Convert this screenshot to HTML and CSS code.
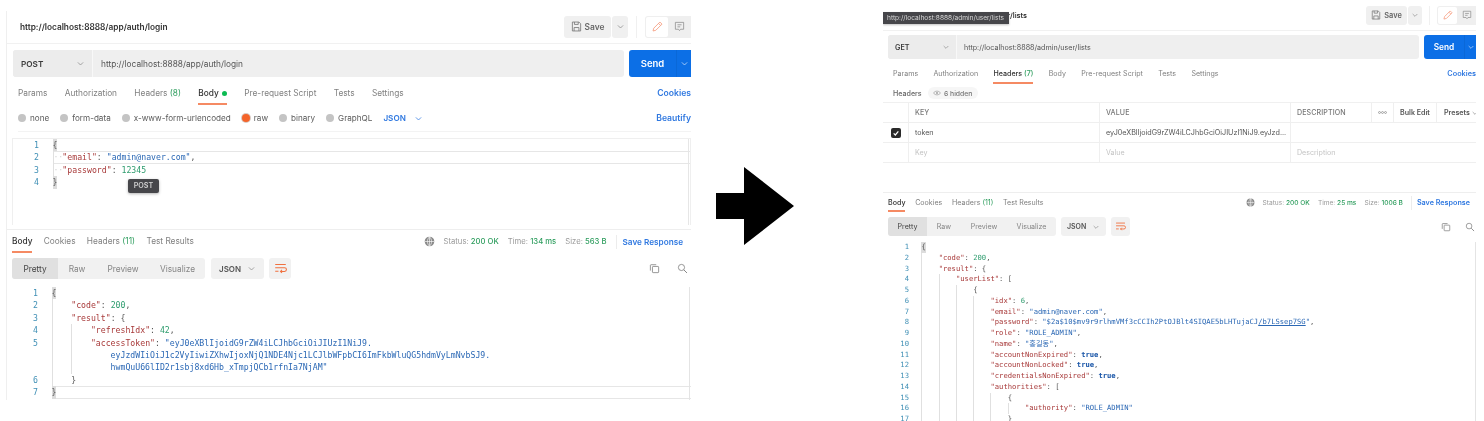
FILE: index.html
```html
<!DOCTYPE html>
<html lang="en">
<head>
<meta charset="utf-8">
<title>Postman requests</title>
<link rel="stylesheet" href="styles.css">
</head>
<body>
<svg class="defs" width="0" height="0" aria-hidden="true">
  <symbol id="i-save" viewBox="0 0 16 16"><path d="M2 1.5h9.5l2.5 2.5v10.500H2zM5 1.500v3.500h5.500v-3.500M4.500 14.500v-5h7v5" fill="none" stroke="currentColor" stroke-width="1.200"/></symbol>
  <symbol id="i-chev" viewBox="0 0 12 12"><path d="M2.500 4.500L6 8l3.500-3.500" fill="none" stroke="currentColor" stroke-width="1"/></symbol>
  <symbol id="i-pen" viewBox="0 0 16 16"><path d="M11.500 1.500l3 3-9 9-4 1 1-4zM9.500 3.500l3 3" fill="none" stroke="currentColor" stroke-width="1.200"/></symbol>
  <symbol id="i-comment" viewBox="0 0 16 16"><path d="M2 2h12v10H9.500L8 14l-1.500-2H2zM5 5.500h6M5 8.500h4" fill="none" stroke="currentColor" stroke-width="1.100"/></symbol>
  <symbol id="i-globe" viewBox="0 0 16 16"><circle cx="8" cy="8" r="7" fill="#8a8a8a"/><path d="M1 8h14M8 1v14M8 1c-4 4-4 10 0 14M8 1c4 4 4 10 0 14" fill="none" stroke="#fff" stroke-width=".9"/></symbol>
  <symbol id="i-copy" viewBox="0 0 16 16"><path d="M10.500 2.500H3a1 1 0 0 0-1 1V11" fill="none" stroke="currentColor" stroke-width="1.100"/><rect x="5" y="5" width="9" height="9" rx="1" fill="none" stroke="currentColor" stroke-width="1.100"/></symbol>
  <symbol id="i-search" viewBox="0 0 16 16"><circle cx="6.500" cy="6.500" r="4.500" fill="none" stroke="currentColor" stroke-width="1.100"/><path d="M10 10l4.500 4.500" stroke="currentColor" stroke-width="1.300"/></symbol>
  <symbol id="i-wrap" viewBox="0 0 16 16"><path d="M1.500 3h13M1.500 7h11.500a2.300 2.300 0 0 1 0 4.600H8M9.800 9.800L8 11.600l1.800 1.800M1.500 11.500h4" fill="none" stroke="currentColor" stroke-width="1.300"/></symbol>
  <symbol id="i-eye" viewBox="0 0 16 16"><path d="M1 8c3-5 11-5 14 0-3 5-11 5-14 0z" fill="none" stroke="currentColor" stroke-width="1.300"/><circle cx="8" cy="8" r="1.800" fill="currentColor"/></symbol>
  <symbol id="i-check" viewBox="0 0 12 12"><path d="M2.500 6.500l2.500 2.500 4.500-5.500" fill="none" stroke="currentColor" stroke-width="1.800"/></symbol>
  <symbol id="i-dots" viewBox="0 0 12 4"><circle cx="2" cy="2" r="1.300" fill="none" stroke="currentColor" stroke-width=".8"/><circle cx="6" cy="2" r="1.300" fill="none" stroke="currentColor" stroke-width=".8"/><circle cx="10" cy="2" r="1.300" fill="none" stroke="currentColor" stroke-width=".8"/></symbol>
</svg>

<main class="page">
  <section class="panel panel-a">
    <header class="title-row">
      <span class="title">http://localhost:8888/app/auth/login</span>
      <div class="title-tools">
        <span class="save"><svg class="ico-save"><use href="#i-save"/></svg>Save</span>
        <span class="save-more"><svg class="ico-chev"><use href="#i-chev"/></svg></span>
        <span class="tool-sep"></span>
        <span class="mode">
          <span class="mode-on"><svg class="ico-mode"><use href="#i-pen"/></svg></span>
          <span class="mode-off"><svg class="ico-mode"><use href="#i-comment"/></svg></span>
        </span>
      </div>
    </header>
    <div class="url-row">
      <div class="url-box">
        <span class="method">POST<svg class="ico-chev"><use href="#i-chev"/></svg></span>
        <span class="url">http://localhost:8888/app/auth/login</span>
      </div>
      <div class="send"><span class="send-label">Send</span><span class="send-more"><svg class="ico-chev"><use href="#i-chev"/></svg></span></div>
    </div>
    <nav class="tabs">
      <span class="tab">Params</span>
      <span class="tab">Authorization</span>
      <span class="tab">Headers <em>(8)</em></span>
      <span class="tab tab-on">Body <i class="dot"></i></span>
      <span class="tab">Pre-request Script</span>
      <span class="tab">Tests</span>
      <span class="tab">Settings</span>
      <span class="tab-link">Cookies</span>
    </nav>
    <div class="radios">
      <span class="radio"><i></i>none</span>
      <span class="radio"><i></i>form-data</span>
      <span class="radio"><i></i>x-www-form-urlencoded</span>
      <span class="radio radio-on"><i></i>raw</span>
      <span class="radio"><i></i>binary</span>
      <span class="radio"><i></i>GraphQL</span>
      <span class="lang">JSON<svg class="ico-chev"><use href="#i-chev"/></svg></span>
      <span class="tab-link">Beautify</span>
    </div>
    <div class="editor code">
      <div class="line"><span class="n">1</span><span class="c"><b class="fold">{</b></span></div>
      <div class="line active"><span class="n">2</span><span class="c"><u class="gs">··</u><span class="k">"email"</span>: <span class="s">"admin@naver.com"</span>,</span></div>
      <div class="line"><span class="n">3</span><span class="c"><u class="gs">··</u><span class="k">"password"</span>: <span class="d">12345</span></span></div>
      <div class="line"><span class="n">4</span><span class="c"><b class="fold">}</b></span></div>
      <span class="tip">POST</span>
    </div>
    <div class="res-tabs">
      <span class="tab tab-on">Body</span>
      <span class="tab">Cookies</span>
      <span class="tab">Headers <em>(11)</em></span>
      <span class="tab">Test Results</span>
      <div class="meta">
        <svg class="ico-globe"><use href="#i-globe"/></svg>
        <span>Status: <em>200 OK</em></span>
        <span>Time: <em>134 ms</em></span>
        <span>Size: <em>563 B</em></span>
        <span class="meta-sep"></span>
        <span class="meta-link">Save Response</span>
        <svg class="ico-chev blue"><use href="#i-chev"/></svg>
      </div>
    </div>
    <div class="view-bar">
      <div class="views"><span class="view view-on">Pretty</span><span class="view">Raw</span><span class="view">Preview</span><span class="view">Visualize</span></div>
      <span class="fmt">JSON<svg class="ico-chev"><use href="#i-chev"/></svg></span>
      <span class="wrap"><svg class="ico-wrap"><use href="#i-wrap"/></svg></span>
      <span class="view-tools"><svg class="ico-tool"><use href="#i-copy"/></svg><svg class="ico-tool"><use href="#i-search"/></svg></span>
    </div>
    <div class="output code">
      <div class="line"><span class="n">1</span><span class="c"><b class="fold">{</b></span></div>
      <div class="line"><span class="n">2</span><span class="c"><u class="g"></u><span class="k">"code"</span>: <span class="d">200</span>,</span></div>
      <div class="line"><span class="n">3</span><span class="c"><u class="g"></u><span class="k">"result"</span>: {</span></div>
      <div class="line"><span class="n">4</span><span class="c"><u class="g"></u><u class="g"></u><span class="k">"refreshIdx"</span>: <span class="d">42</span>,</span></div>
      <div class="line"><span class="n">5</span><span class="c"><u class="g"></u><u class="g"></u><span class="k">"accessToken"</span>: <span class="s">"eyJ0eXBlIjoidG9rZW4iLCJhbGciOiJIUzI1NiJ9.</span></span></div>
      <div class="line"><span class="n"></span><span class="c"><u class="g"></u><u class="g"></u><u class="gn"></u><span class="s">eyJzdWIiOiJ1c2VyIiwiZXhwIjoxNjQ1NDE4Njc1LCJlbWFpbCI6ImFkbWluQG5hdmVyLmNvbSJ9.</span></span></div>
      <div class="line"><span class="n"></span><span class="c"><u class="g"></u><u class="g"></u><u class="gn"></u><span class="s">hwmQuU66lID2r1sbj8xd6Hb_xTmpjQCb1rfnIa7NjAM"</span></span></div>
      <div class="line"><span class="n">6</span><span class="c"><u class="g"></u>}</span></div>
      <div class="line active"><span class="n">7</span><span class="c"><b class="fold">}</b></span></div>
    </div>
  </section>

  <svg class="arrow" viewBox="0 0 78 78" aria-hidden="true"><path d="M0 26h28V0l50 39-50 39V52H0z"/></svg>

  <section class="panel panel-b">
    <header class="title-row">
      <span class="title">http://localhost:8888/admin/user/lists</span>
      <div class="title-tools">
        <span class="save"><svg class="ico-save"><use href="#i-save"/></svg>Save</span>
        <span class="save-more"><svg class="ico-chev"><use href="#i-chev"/></svg></span>
        <span class="tool-sep"></span>
        <span class="mode">
          <span class="mode-on"><svg class="ico-mode"><use href="#i-pen"/></svg></span>
          <span class="mode-off"><svg class="ico-mode"><use href="#i-comment"/></svg></span>
        </span>
      </div>
      <span class="url-tip">http://localhost:8888/admin/user/lists</span>
    </header>
    <div class="url-row">
      <div class="url-box">
        <span class="method">GET<svg class="ico-chev"><use href="#i-chev"/></svg></span>
        <span class="url">http://localhost:8888/admin/user/lists</span>
      </div>
      <div class="send"><span class="send-label">Send</span><span class="send-more"><svg class="ico-chev"><use href="#i-chev"/></svg></span></div>
    </div>
    <nav class="tabs">
      <span class="tab">Params</span>
      <span class="tab">Authorization</span>
      <span class="tab tab-on">Headers <em>(7)</em></span>
      <span class="tab">Body</span>
      <span class="tab">Pre-request Script</span>
      <span class="tab">Tests</span>
      <span class="tab">Settings</span>
      <span class="tab-link">Cookies</span>
    </nav>
    <div class="hdr-row">
      <span class="hdr-label">Headers</span>
      <span class="hidden-pill"><svg class="ico-eye"><use href="#i-eye"/></svg>6 hidden</span>
    </div>
    <div class="table">
      <div class="cell"></div>
      <div class="cell th">KEY</div>
      <div class="cell th">VALUE</div>
      <div class="cell th">DESCRIPTION</div>
      <div class="cell th th-c"><svg class="ico-dots"><use href="#i-dots"/></svg></div>
      <div class="cell th th-c th-b">Bulk Edit</div>
      <div class="cell th th-b th-p">Presets<svg class="ico-chev"><use href="#i-chev"/></svg></div>

      <div class="cell cell-check"><span class="check"><svg class="ico-check"><use href="#i-check"/></svg></span></div>
      <div class="cell">token</div>
      <div class="cell cell-clip">eyJ0eXBlIjoidG9rZW4iLCJhbGciOiJIUzI1NiJ9.eyJzd...</div>
      <div class="cell cell-wide"></div>

      <div class="cell"></div>
      <div class="cell ph">Key</div>
      <div class="cell ph">Value</div>
      <div class="cell cell-wide ph">Description</div>
    </div>
    <div class="res-tabs">
      <span class="tab tab-on">Body</span>
      <span class="tab">Cookies</span>
      <span class="tab">Headers <em>(11)</em></span>
      <span class="tab">Test Results</span>
      <div class="meta">
        <svg class="ico-globe"><use href="#i-globe"/></svg>
        <span>Status: <em>200 OK</em></span>
        <span>Time: <em>25 ms</em></span>
        <span>Size: <em>1006 B</em></span>
        <span class="meta-sep"></span>
        <span class="meta-link">Save Response</span>
        <svg class="ico-chev blue"><use href="#i-chev"/></svg>
      </div>
    </div>
    <div class="view-bar">
      <div class="views"><span class="view view-on">Pretty</span><span class="view">Raw</span><span class="view">Preview</span><span class="view">Visualize</span></div>
      <span class="fmt">JSON<svg class="ico-chev"><use href="#i-chev"/></svg></span>
      <span class="wrap"><svg class="ico-wrap"><use href="#i-wrap"/></svg></span>
      <span class="view-tools"><svg class="ico-tool"><use href="#i-copy"/></svg><svg class="ico-tool"><use href="#i-search"/></svg></span>
    </div>
    <div class="output code">
      <div class="line"><span class="n">1</span><span class="c"><b class="fold">{</b></span></div>
      <div class="line"><span class="n">2</span><span class="c"><u class="g"></u><span class="k">"code"</span>: <span class="d">200</span>,</span></div>
      <div class="line"><span class="n">3</span><span class="c"><u class="g"></u><span class="k">"result"</span>: {</span></div>
      <div class="line"><span class="n">4</span><span class="c"><u class="g"></u><u class="g"></u><span class="k">"userList"</span>: [</span></div>
      <div class="line"><span class="n">5</span><span class="c"><u class="g"></u><u class="g"></u><u class="g"></u>{</span></div>
      <div class="line"><span class="n">6</span><span class="c"><u class="g"></u><u class="g"></u><u class="g"></u><u class="g"></u><span class="k">"idx"</span>: <span class="d">6</span>,</span></div>
      <div class="line"><span class="n">7</span><span class="c"><u class="g"></u><u class="g"></u><u class="g"></u><u class="g"></u><span class="k">"email"</span>: <span class="s">"admin@naver.com"</span>,</span></div>
      <div class="line"><span class="n">8</span><span class="c"><u class="g"></u><u class="g"></u><u class="g"></u><u class="g"></u><span class="k">"password"</span>: <span class="s">"$2a$10$mv9r9rlhmVMf3cCCIh2PtOJBlt4SIQAE5bLHTujaCJ<a class="link">/b7LSsep7SG</a>"</span>,</span></div>
      <div class="line"><span class="n">9</span><span class="c"><u class="g"></u><u class="g"></u><u class="g"></u><u class="g"></u><span class="k">"role"</span>: <span class="s">"ROLE_ADMIN"</span>,</span></div>
      <div class="line"><span class="n">10</span><span class="c"><u class="g"></u><u class="g"></u><u class="g"></u><u class="g"></u><span class="k">"name"</span>: <span class="s">"홍길동"</span>,</span></div>
      <div class="line"><span class="n">11</span><span class="c"><u class="g"></u><u class="g"></u><u class="g"></u><u class="g"></u><span class="k">"accountNonExpired"</span>: <span class="t">true</span>,</span></div>
      <div class="line"><span class="n">12</span><span class="c"><u class="g"></u><u class="g"></u><u class="g"></u><u class="g"></u><span class="k">"accountNonLocked"</span>: <span class="t">true</span>,</span></div>
      <div class="line"><span class="n">13</span><span class="c"><u class="g"></u><u class="g"></u><u class="g"></u><u class="g"></u><span class="k">"credentialsNonExpired"</span>: <span class="t">true</span>,</span></div>
      <div class="line"><span class="n">14</span><span class="c"><u class="g"></u><u class="g"></u><u class="g"></u><u class="g"></u><span class="k">"authorities"</span>: [</span></div>
      <div class="line"><span class="n">15</span><span class="c"><u class="g"></u><u class="g"></u><u class="g"></u><u class="g"></u><u class="g"></u>{</span></div>
      <div class="line"><span class="n">16</span><span class="c"><u class="g"></u><u class="g"></u><u class="g"></u><u class="g"></u><u class="g"></u><u class="g"></u><span class="k">"authority"</span>: <span class="s">"ROLE_ADMIN"</span></span></div>
      <div class="line"><span class="n">17</span><span class="c"><u class="g"></u><u class="g"></u><u class="g"></u><u class="g"></u><u class="g"></u>}</span></div>
    </div>
  </section>
</main>
</body>
</html>
```
FILE: styles.css
```css
* { box-sizing: border-box; }
html, body { margin: 0; height: 421px; overflow: hidden; background: #fff; }
.defs { position: absolute; }
.page { display: flex; align-items: flex-start; height: 421px; overflow: hidden; font-family: Inter, "Liberation Sans", sans-serif; color: #4a4a4a; }
.panel { position: relative; flex: none; overflow: hidden; background: #fff; filter: blur(.4px); }
.panel-a { width: 685px; height: 389px; margin: 11px 0 0 6px; border-left: 1px solid #efefef; font-size: 8.3px; }
.panel-b { width: 593px; height: 421px; margin-left: 89px; font-size: 7.1px; }
.arrow { flex: none; width: 78px; height: 78px; margin: 167px 0 0 25px; fill: #000; }

em { font-style: normal; color: #2f9e5f; }
svg { display: block; flex: none; }
.ico-chev { color: #8a8a8a; }
.ico-chev.blue { color: #2f78e0; }

/* title row */
.title-row { position: relative; display: flex; align-items: center; justify-content: space-between; border-bottom: 1px solid #f1f1f1; }
.panel-a .title-row { height: 33px; padding-left: 13px; }
.panel-b .title-row { height: 31px; padding-left: 10px; }
.title { font-weight: 600; color: #333; white-space: nowrap; }
.panel-a .title { font-size: 8.3px; }
.panel-b .title { font-size: 7.26px; }
.title-tools { display: flex; align-items: center; flex: none; }
.save, .save-more { display: flex; align-items: center; justify-content: center; background: #f0f0f0; border-radius: 3px; color: #666; font-weight: 600; }
.panel-a .title-tools { height: 22px; margin-top: -1px; }
.panel-a .save { width: 47px; height: 22px; font-size: 8.4px; gap: 3px; }
.panel-a .save-more { width: 16px; height: 22px; margin-left: 1px; }
.panel-b .title-tools { height: 19px; }
.panel-b .save { width: 41px; height: 19px; font-size: 7.4px; gap: 3px; }
.panel-b .save-more { width: 14px; height: 19px; margin-left: 1px; }
.ico-save { color: #777; }
.panel-a .ico-save { width: 11px; height: 11px; }
.panel-b .ico-save { width: 10px; height: 10px; }
.panel-a .ico-chev { width: 9px; height: 9px; }
.panel-b .ico-chev { width: 8px; height: 8px; }
.tool-sep { width: 1px; height: 100%; background: #f0f0f0; }
.panel-a .tool-sep { margin: 0 8px; }
.panel-b .tool-sep { margin: 0 7px; }
.mode { display: flex; height: 100%; background: #efefef; border-radius: 3px 0 0 3px; padding: 1px 0 1px 1px; }
.panel-a .mode { width: 46px; }
.panel-b .mode { width: 39px; }
.mode-on { display: flex; align-items: center; justify-content: center; background: #fff; border-radius: 2px; color: #f59a7c; }
.mode-off { display: flex; align-items: center; justify-content: center; color: #8a8a8a; }
.panel-a .mode-on, .panel-a .mode-off { width: 22px; }
.panel-b .mode-on, .panel-b .mode-off { width: 19px; }
.panel-a .ico-mode { width: 11px; height: 11px; }
.panel-b .ico-mode { width: 10px; height: 10px; }
.url-tip { position: absolute; left: 0; top: 12px; width: 126px; height: 12px; background: #46464a; color: #d9d9d9; font-size: 6.6px; line-height: 12px; padding-left: 4px; white-space: nowrap; box-shadow: 0 1px 2px rgba(0,0,0,.25); }

/* url row */
.url-row { display: flex; }
.panel-a .url-row { height: 27px; margin: 6px 0 0 6px; gap: 5px; }
.panel-b .url-row { height: 24px; margin: 4px 0 0 5px; gap: 5px; }
.url-box { display: flex; background: #efefef; border-radius: 3px; overflow: hidden; }
.panel-a .url-box { width: 612px; }
.panel-b .url-box { width: 531px; }
.method { display: flex; align-items: center; justify-content: space-between; font-weight: 600; color: #3a3a3a; border-right: 1px solid #f8f8f8; background: #ececec; }
.panel-a .method { width: 80px; padding: 0 7px 0 8px; font-size: 8.2px; }
.panel-b .method { width: 69px; padding: 0 6px 0 7px; font-size: 7.2px; }
.url { display: flex; align-items: center; color: #555; white-space: nowrap; }
.panel-a .url { padding-left: 8px; font-size: 8.3px; }
.panel-b .url { padding-left: 7px; font-size: 7.15px; }
.send { display: flex; flex: none; background: #0c6fe6; border-radius: 3px 0 0 3px; color: #fff; font-weight: 600; align-items: center; overflow: hidden; }
.panel-a .send { width: 62px; font-size: 9.5px; }
.panel-b .send { width: 52px; font-size: 8.3px; }
.send-label { text-align: center; }
.panel-a .send-label { width: 47px; }
.panel-b .send-label { width: 40px; }
.send-more { display: flex; align-items: center; justify-content: center; height: 100%; border-left: 1px solid #0a68d8; flex: 1; }
.send-more .ico-chev { color: #cfe2fb; }

/* tabs */
.tabs { display: flex; color: #808080; }
.panel-a .tabs { height: 21px; margin: 7px 0 0 11px; gap: 17.3px; }
.panel-b .tabs { height: 20px; margin: 5px 0 0 10px; gap: 15.3px; }
.tab { white-space: nowrap; border-bottom: 2px solid transparent; height: 100%; line-height: 19px; }
.tab-on { color: #333; font-weight: 500; border-bottom-color: #f58a63; }
.dot { display: inline-block; width: 5px; height: 5px; margin-left: 1px; border-radius: 50%; background: #0cbb52; }
.tab-link { margin-left: auto; color: #2f78e0; font-weight: 600; white-space: nowrap; line-height: 19px; }
.panel-a .tab-link { font-size: 8.6px; }
.panel-b .tab-link { font-size: 7.3px; }

/* radios */
.radios { display: flex; align-items: center; color: #5a5a5a; font-size: 8.15px; height: 22px; margin: 5px 0 0 11px; padding-bottom: 5px; border-bottom: 1px solid #f3f3f3; }
.radio { display: flex; align-items: center; gap: 4px; margin-right: 11px; white-space: nowrap; }
.radio i { width: 8px; height: 8px; border-radius: 50%; background: #c4c4c4; }
.radio-on i { background: #f4642a; box-shadow: 0 0 0 1px #d8c9c2; }
.lang { display: flex; align-items: center; gap: 8px; color: #2f78e0; font-weight: 600; }
.lang .ico-chev { color: #2f78e0; }

/* code */
.code { font-family: "DejaVu Sans Mono", "Liberation Mono", "Noto Sans CJK KR", monospace; position: relative; }
.panel-a .code { font-size: 8.2px; --lh: 12.4px; }
.panel-b .code { font-size: 7.18px; --lh: 10.75px; }
.line { display: flex; height: var(--lh); line-height: var(--lh); white-space: pre; }
.n { flex: none; text-align: right; color: #3f8fb5; }
.panel-a .n { width: 26px; }
.panel-b .n { width: 21px; }
.c { flex: 1; display: flex; color: #555; }
.panel-a .c { margin-left: 13.5px; }
.panel-b .c { margin-left: 12.4px; }
.active .c { box-shadow: inset 0 1px #e6e6e6, inset 0 -1px #e6e6e6; }
.fold { font-weight: 400; background: #dcdcdc; width: 1ch; }
.g { flex: none; width: 4ch; height: 100%; border-left: 1px solid #e0e0e0; text-decoration: none; }
.gn { flex: none; width: 4ch; }
.gs { flex: none; width: 2ch; height: 100%; border-left: 1px solid #e0e0e0; color: #d4d4d4; text-decoration: none; letter-spacing: -.2px; }
.k { color: #a83a3a; }
.s { color: #2b68b5; }
.d { color: #2e9c6e; }
.t { color: #1a56a8; font-weight: 700; }
.link { text-decoration: underline; }
.panel-a .editor { height: 87px; margin: 6px 0 0 5px; border: 1px solid #efefef; border-bottom: 0; }
.editor::after { content: ""; position: absolute; top: 0; right: 1px; bottom: 0; width: 1px; background: #e6e6e6; }
.tip { position: absolute; left: 115px; top: 40px; width: 31px; height: 14px; background: #46464a; color: #d0d0d0; border-radius: 2px; font: 600 7.2px/14px Inter, sans-serif; text-align: center; box-shadow: 0 1px 3px rgba(0,0,0,.3); z-index: 1; }

/* response */
.res-tabs { display: flex; color: #808080; border-top: 1px solid #eee; }
.panel-a .res-tabs { height: 24px; margin-top: 4px; padding-left: 5px; gap: 11.3px; }
.panel-b .res-tabs { height: 20px; margin-top: 29px; padding-left: 5px; gap: 9.7px; }
.panel-a .res-tabs .tab { line-height: 23px; }
.panel-b .res-tabs .tab { line-height: 19px; }
.meta { display: flex; align-items: center; margin-left: auto; white-space: nowrap; color: #9a9a9a; }
.panel-a .meta { gap: 9px; font-size: 7.7px; height: 23px; margin-right: -10px; }
.panel-b .meta { gap: 8px; font-size: 6.6px; height: 19px; margin-right: -10px; }
.meta em { font-weight: 500; }
.panel-a .ico-globe { width: 11px; height: 11px; }
.panel-b .ico-globe { width: 9px; height: 9px; }
.meta-sep { width: 1px; height: 14px; background: #ececec; }
.meta-link { color: #2f78e0; font-weight: 600; }
.panel-a .meta-link { font-size: 8.2px; margin-left: -3px; }
.panel-b .meta-link { font-size: 7.2px; margin-left: -3px; }

.view-bar { display: flex; align-items: stretch; color: #858585; }
.panel-a .view-bar { height: 21px; margin: 5px 0 0 5px; }
.panel-b .view-bar { height: 19px; margin: 5px 0 0 5px; }
.views { display: flex; background: #f1f1f1; border-radius: 3px; overflow: hidden; }
.panel-a .views { width: 193px; }
.panel-b .views { width: 168px; }
.view { display: flex; align-items: center; justify-content: center; }
.panel-a .view { width: 46px; }
.panel-b .view { width: 39px; }
.panel-a .view:nth-child(2) { width: 38px; }
.panel-a .view:nth-child(3) { width: 54px; }
.panel-a .view:nth-child(4) { width: 55px; }
.panel-b .view:nth-child(2) { width: 34px; }
.panel-b .view:nth-child(3) { width: 46px; }
.panel-b .view:nth-child(4) { width: 49px; }
.view-on { background: #e0e0e0; color: #444; }
.fmt { display: flex; align-items: center; justify-content: space-between; background: #f1f1f1; border-radius: 3px; color: #555; font-weight: 600; }
.panel-a .fmt { width: 53px; margin-left: 6px; padding: 0 8px; font-size: 8px; }
.panel-b .fmt { width: 45px; margin-left: 5px; padding: 0 6px; font-size: 7px; }
.wrap { display: flex; align-items: center; justify-content: center; background: #f1f1f1; border-radius: 3px; color: #f0703f; }
.panel-a .wrap { width: 22px; margin-left: 5px; }
.panel-b .wrap { width: 19px; margin-left: 5px; }
.panel-a .ico-wrap { width: 13px; height: 13px; }
.panel-b .ico-wrap { width: 11px; height: 11px; }
.view-tools { display: flex; align-items: center; margin-left: auto; color: #777; }
.panel-a .view-tools { gap: 17px; margin-right: 3px; }
.panel-b .view-tools { gap: 14px; margin-right: 1px; }
.panel-a .ico-tool { width: 11px; height: 11px; }
.panel-b .ico-tool { width: 10px; height: 10px; }
.panel-a .output { margin: 8px 0 0 5px; }
.panel-b .output { margin: 6px 0 0 5px; }
.output::after { content: ""; position: absolute; top: 0; height: 200px; width: 1px; background: #e4e4e4; }
.panel-a .output::after { right: 1px; }
.panel-b .output::after { right: 0; }

/* headers table */
.hdr-row { display: flex; align-items: center; height: 18px; padding-left: 10px; gap: 6px; }
.hdr-label { color: #666; font-weight: 500; }
.hidden-pill { display: flex; align-items: center; justify-content: center; gap: 3px; width: 50px; height: 12px; border-radius: 6px; background: #f6f6f6; color: #777; font-weight: 500; font-size: 6.8px; }
.ico-eye { width: 8px; height: 8px; color: #999; }
.table { display: grid; grid-template-columns: 26px 191px 191px 81px 22px 43px 39px; grid-auto-rows: 20px; border-top: 1px solid #f0f0f0; }
.cell { display: flex; align-items: center; padding-left: 6px; border-bottom: 1px solid #efefef; border-right: 1px solid #efefef; white-space: nowrap; overflow: hidden; color: #555; }
.cell-wide { grid-column: span 4; border-right: 0; }
.cell-check { justify-content: center; padding-left: 0; }
.cell-clip { font-size: 7.2px; }
.th { font-weight: 500; color: #777; letter-spacing: .1px; }
.th-c { justify-content: center; padding-left: 0; }
.th-b { color: #555; font-weight: 600; letter-spacing: 0; }
.th-p { padding-left: 7px; gap: 1px; border-right: 0; }
.ph { color: #c4c4c4; }
.check { display: flex; align-items: center; justify-content: center; width: 10px; height: 10px; border-radius: 2px; background: #2a2a2a; color: #fff; }
.ico-check { width: 8px; height: 8px; }
.ico-dots { width: 9px; height: 3px; color: #777; }
```
